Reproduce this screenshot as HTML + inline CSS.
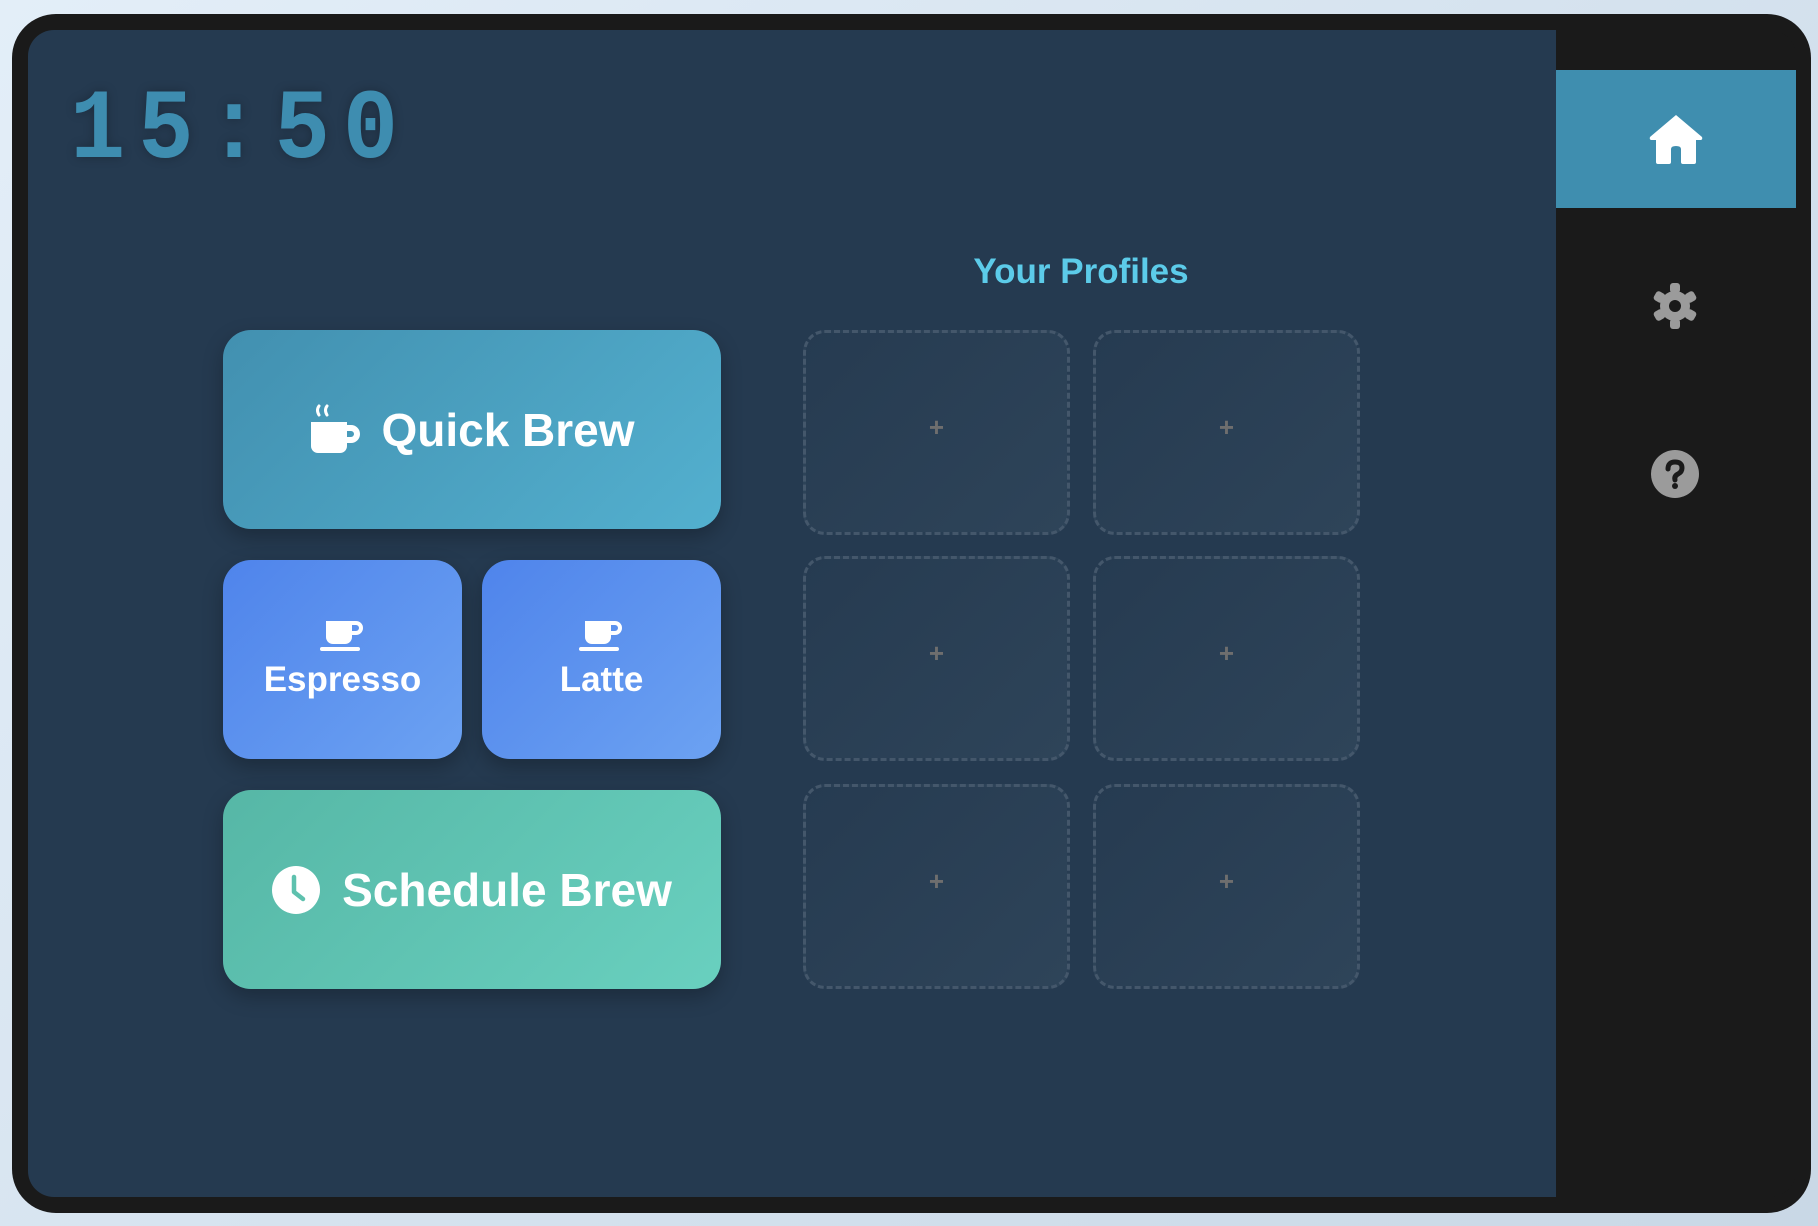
<!DOCTYPE html>
<html><head><meta charset="utf-8"><style>
*{margin:0;padding:0;box-sizing:border-box}
html,body{width:1818px;height:1226px;overflow:hidden;background:linear-gradient(135deg,#e3eef8,#c9d8e6);font-family:"Liberation Sans",sans-serif}
.frame{position:absolute;left:12px;top:14px;width:1799px;height:1199px;background:#1a1a1a;border-radius:44px}
.panel{position:absolute;left:28px;top:30px;width:1528px;height:1167px;background:#253a50;border-radius:26px 0 0 26px}
.side{position:absolute;left:1556px;top:30px;width:240px;height:1167px;background:#1a1a1a;border-radius:0 26px 26px 0}
.home{position:absolute;left:1556px;top:70px;width:240px;height:138px;background:#3f8eaf}
.clock{position:absolute;left:70px;top:74px;font-family:"Liberation Mono",monospace;font-weight:bold;font-size:92px;color:#3e8db0;letter-spacing:13px;transform:scaleY(1.08);transform-origin:top left;text-shadow:0 0 10px rgba(0,0,0,.25)}
.btn{position:absolute;border-radius:28px;color:#fff;font-weight:bold;display:flex;align-items:center;justify-content:center;box-shadow:0 8px 20px rgba(0,0,0,.25)}
.qb{left:223px;top:330px;width:498px;height:199px;background:linear-gradient(135deg,#4290b0,#53b0cf);font-size:46px}
.es{top:560px;width:239px;height:199px;background:linear-gradient(135deg,#4f84eb,#6ca2f2);font-size:35px;flex-direction:column}
.sb{left:223px;top:790px;width:498px;height:199px;background:linear-gradient(135deg,#56b7a6,#69d0bf);font-size:46px}
.title{position:absolute;left:900px;width:362px;top:252px;text-align:center;color:#5ccbe9;font-weight:bold;font-size:35px}
.card{position:absolute;width:267px;height:205px;border:3px dashed #44576b;border-radius:22px;background:linear-gradient(135deg,#263b51,#2e4459);color:#6e6e6e;font-size:26px;font-weight:bold;display:flex;align-items:center;justify-content:center;padding-bottom:10px}
</style></head><body>
<div class="frame"></div>
<div class="panel"></div>
<div class="side"></div>
<div class="home"></div>
<div class="clock">15:50</div>

<div class="btn qb"><svg width="52" height="52" viewBox="0 0 52 52" style="margin-right:20px"><path d="M10 2q-3 4 0 9M18 2q-3 4 0 9" stroke="#fff" stroke-width="3" fill="none" stroke-linecap="round"/><path d="M2 18h36v24a7 7 0 0 1-7 7H9a7 7 0 0 1-7-7z" fill="#fff"/><path d="M38 21h4a9 9 0 0 1 0 18h-4v-6h4a3 3 0 0 0 0-6h-4z" fill="#fff"/></svg><span>Quick Brew</span></div>

<div class="btn es" style="left:223px"><svg width="46" height="32" viewBox="0 0 46 32" style="margin-bottom:8px"><path d="M6 1h26v16a7 7 0 0 1-7 7H13a7 7 0 0 1-7-7z" fill="#fff"/><path d="M32 1h4a7 7 0 0 1 0 14h-4v-4h4a3 3 0 0 0 0-6h-4z" fill="#fff"/><rect x="0" y="27" width="40" height="4" rx="2" fill="#fff"/></svg><span>Espresso</span></div>
<div class="btn es" style="left:482px"><svg width="46" height="32" viewBox="0 0 46 32" style="margin-bottom:8px"><path d="M6 1h26v16a7 7 0 0 1-7 7H13a7 7 0 0 1-7-7z" fill="#fff"/><path d="M32 1h4a7 7 0 0 1 0 14h-4v-4h4a3 3 0 0 0 0-6h-4z" fill="#fff"/><rect x="0" y="27" width="40" height="4" rx="2" fill="#fff"/></svg><span>Latte</span></div>

<div class="btn sb"><svg width="48" height="48" viewBox="0 0 48 48" style="margin-right:22px"><circle cx="24" cy="24" r="24" fill="#fff"/><path d="M22 11v15l9 7" stroke="#5ec1ae" stroke-width="4.5" fill="none" stroke-linecap="round" stroke-linejoin="round"/></svg><span>Schedule Brew</span></div>

<div class="title">Your Profiles</div>
<div class="card" style="left:803px;top:330px">+</div>
<div class="card" style="left:1093px;top:330px">+</div>
<div class="card" style="left:803px;top:556px">+</div>
<div class="card" style="left:1093px;top:556px">+</div>
<div class="card" style="left:803px;top:784px">+</div>
<div class="card" style="left:1093px;top:784px">+</div>

<svg style="position:absolute;left:1648px;top:113px" width="56" height="52" viewBox="0 0 56 52"><path d="M28 2L2 24q-1 3 2 3h4v22q0 2 2 2h11q2 0 2-2V36q0-3 5-3t5 3v13q0 2 2 2h11q2 0 2-2V27h4q3 0 2-3z" fill="#fff"/></svg>
<svg style="position:absolute;left:1651px;top:282px" width="48" height="48" viewBox="0 0 48 48"><g fill="#9b9b9b"><circle cx="24" cy="24" r="15"/><g id="t"><rect x="19" y="1" width="10" height="10" rx="3"/></g><use href="#t" transform="rotate(60 24 24)"/><use href="#t" transform="rotate(120 24 24)"/><use href="#t" transform="rotate(180 24 24)"/><use href="#t" transform="rotate(240 24 24)"/><use href="#t" transform="rotate(300 24 24)"/></g><circle cx="24" cy="24" r="6" fill="#1a1a1a"/></svg>
<svg style="position:absolute;left:1651px;top:450px" width="48" height="48" viewBox="0 0 48 48"><circle cx="24" cy="24" r="24" fill="#9b9b9b"/><path d="M17 19q0-7 7-7t7 6q0 4-4 6t-3 6" stroke="#1a1a1a" stroke-width="5" fill="none" stroke-linecap="round"/><circle cx="24" cy="36" r="3" fill="#1a1a1a"/></svg>
</body></html>
